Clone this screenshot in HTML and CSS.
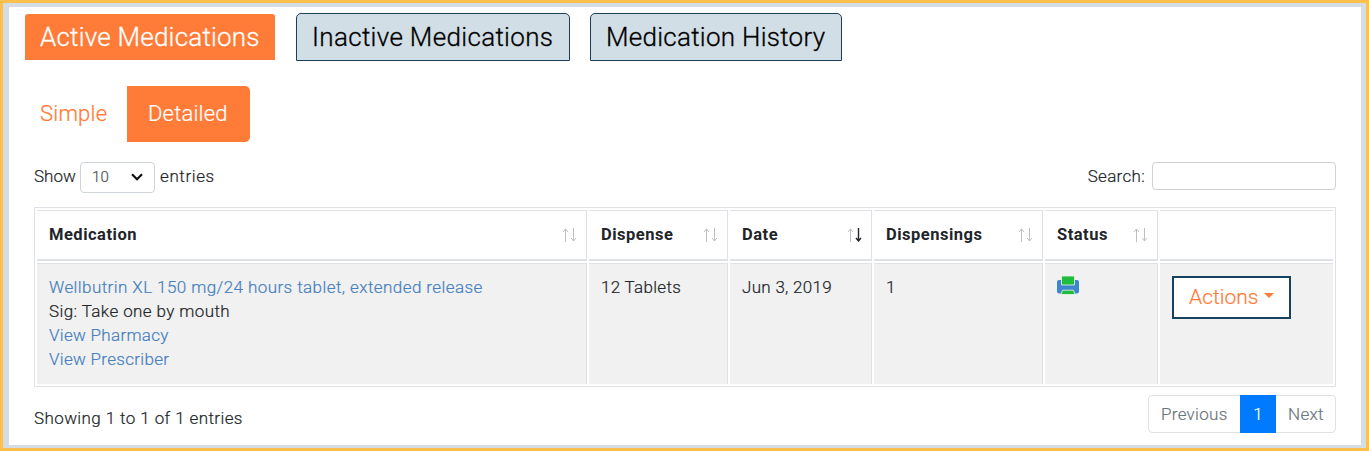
FILE: index.html
```html
<!DOCTYPE html>
<html lang="en">
<head>
  <meta charset="UTF-8" />
  <title>Medications</title>
  <link rel="stylesheet" href="styles.css">
</head>
<body>
  <div class="container">
    <!-- Tabs -->
    <div class="tabs">
      <a class="tab active"><span>Active Medications</span></a>
      <a class="tab"><span>Inactive Medications</span></a>
      <a class="tab history"><span>Medication History</span></a>
    </div>

    <!-- View switch -->
    <div class="pills">
      <a class="pill"><span>Simple</span></a>
      <a class="pill active"><span>Detailed</span></a>
    </div>

    <div class="content">
      <div class="controls">
        <div class="length">
          <span class="show">Show</span>
          <div class="select">
            <span>10</span>
            <svg width="12" height="8" viewBox="0 0 12 8"><path d="M1 1.2 6 6.2 11 1.2" fill="none" stroke="#111" stroke-width="2.2"/></svg>
          </div>
          <span class="entries">entries</span>
        </div>
        <label class="search"><span>Search:</span><input type="text"></label>
      </div>

      <table class="medications">
        <colgroup>
          <col class="col-med"><col class="col-dispense"><col class="col-date"><col class="col-count"><col class="col-status"><col>
        </colgroup>
        <thead>
          <tr>
            <th><div class="head"><span>Medication</span><svg class="sort" width="16" height="14" viewBox="0 0 16 14"><path d="M4.5 14V1M2 4 4.5 1 7 4"/><path d="M12.5 0V13M10 10l2.500 3L15 10"/></svg></div></th>
            <th><div class="head"><span>Dispense</span><svg class="sort" width="16" height="14" viewBox="0 0 16 14"><path d="M4.5 14V1M2 4 4.5 1 7 4"/><path d="M12.5 0V13M10 10l2.500 3L15 10"/></svg></div></th>
            <th><div class="head"><span>Date</span><svg class="sort" width="16" height="14" viewBox="0 0 16 14"><path d="M4.5 14V1M2 4 4.5 1 7 4"/><path class="on" d="M12.5 0V13M10 10l2.500 3L15 10"/></svg></div></th>
            <th><div class="head"><span>Dispensings</span><svg class="sort" width="16" height="14" viewBox="0 0 16 14"><path d="M4.5 14V1M2 4 4.5 1 7 4"/><path d="M12.5 0V13M10 10l2.500 3L15 10"/></svg></div></th>
            <th><div class="head"><span>Status</span><svg class="sort" width="16" height="14" viewBox="0 0 16 14"><path d="M4.5 14V1M2 4 4.5 1 7 4"/><path d="M12.5 0V13M10 10l2.500 3L15 10"/></svg></div></th>
            <th></th>
          </tr>
        </thead>
        <tbody>
          <tr>
            <td>
              <a class="drug">Wellbutrin XL 150 mg/24 hours tablet, extended release</a><br>
              <span class="sig">Sig: Take one by mouth</span><br>
              <a>View Pharmacy</a><br>
              <a>View Prescriber</a>
            </td>
            <td>12 Tablets</td>
            <td>Jun 3, 2019</td>
            <td>1</td>
            <td>
              <svg class="printer" width="22" height="19" viewBox="0 0 22 19">
                <path d="M2 4h18a2 2 0 0 1 2 2v9.500a2 2 0 0 1-2 2H2a2 2 0 0 1-2-2V6a2 2 0 0 1 2-2z" fill="#3c86cc"/>
                <path d="M4.500 0h13V9h-13zM5.500 14.200h11l1.500 4.300H4z" fill="#20bd3b" stroke="#f1f1f1" stroke-width=".8"/>
              </svg>
            </td>
            <td><button class="actions"><span>Actions</span><i class="caret"></i></button></td>
          </tr>
        </tbody>
      </table>

      <div class="footer">
        <div class="info">Showing 1 to 1 of 1 entries</div>
        <div class="pagination">
          <a class="prev">Previous</a>
          <a class="current">1</a>
          <a class="next">Next</a>
        </div>
      </div>
    </div>
  </div>
</body>
</html>
```
FILE: styles.css
```css
* {
  box-sizing: border-box;
}
body {
  margin: 0;
  height: 451px;
  border: 3px solid #ffbf4d;
  padding: 4px 5px 3px 6px;
  background-color: #d3dde2;
  font-family: Roboto, "Liberation Sans", sans-serif;
  font-size: 17px;
  font-weight: 300;
  letter-spacing: 0.3px;
  line-height: 24px;
  color: #212529;
  -webkit-text-stroke-width: 0.2px;
}
.container {
  height: 438px;
  background-color: #fff;
  padding: 6px 25px 0 16px;
  overflow: hidden;
}
.tabs {
  display: flex;
  align-items: center;
  gap: 20px;
}
.tab {
  height: 48px;
  width: 274px;
  display: flex;
  align-items: center;
  padding-left: 15px;
  font-size: 26px;
  letter-spacing: 0.33px;
  color: #000;
  background-color: #d1dee5;
  border: 1px solid #1c4057;
  border-radius: 5px 5px 0 0;
  -webkit-text-stroke-width: 0.3px;
}
.tab.active {
  height: 46px;
  width: 250px;
  margin-right: 1px;
  letter-spacing: 0.22px;
  color: #fff;
  background-color: #ff7b38;
  border: none;
  border-radius: 3px 3px 0 0;
}
.tab.history {
  width: 252px;
  letter-spacing: 0.27px;
}
.pills {
  display: flex;
  margin-top: 25px;
}
.pill {
  height: 56px;
  width: 102px;
  padding-left: 15px;
  display: flex;
  align-items: center;
  font-size: 22px;
  letter-spacing: 0.2px;
  color: #ff7b38;
}
.pill.active {
  width: 123px;
  padding-left: 21px;
  color: #fff;
  background-color: #ff7b38;
  border-radius: 0 5px 5px 0;
}
.content {
  padding: 20px 0 0 9px;
}
.controls {
  display: flex;
  justify-content: space-between;
  height: 45px;
}
.length {
  display: flex;
  height: 31px;
  line-height: 29px;
}
.show {
  width: 46px;
  letter-spacing: 0;
}
.entries {
  letter-spacing: 0.6px;
}
.select {
  width: 75px;
  height: 31px;
  padding: 0 11px;
  margin-right: 5px;
  display: flex;
  align-items: center;
  justify-content: space-between;
  border: 1px solid #ced4da;
  border-radius: 4px;
  font-size: 15px;
  color: #495057;
}
.select svg {
  margin-top: -1px;
}
.search {
  display: flex;
  height: 28px;
  line-height: 29px;
}
.search input {
  width: 184px;
  height: 28px;
  margin-left: 7px;
  border: 1px solid #ced0d3;
  border-radius: 4px;
}
.medications {
  width: 1302px;
  table-layout: fixed;
  border: 1px solid #dee2e6;
  border-collapse: separate;
  border-spacing: 2px;
}
.col-med { width: 550px; }
.col-dispense { width: 139px; }
.col-date { width: 142px; }
.col-count { width: 169px; }
.col-status { width: 113px; }
.medications th,
.medications td {
  padding: 12px;
  text-align: left;
  vertical-align: top;
  border: 0 solid #dee2e6;
  border-width: 1px 1px 0 0;
}
.medications th {
  height: 51px;
  font-size: 16.5px;
  font-weight: 700;
  letter-spacing: 0.5px;
  border-bottom-width: 2px;
  -webkit-text-stroke-width: 0;
}
.medications td {
  height: 121px;
  padding-top: 11px;
  background-color: #f1f1f1;
}
.medications th:last-child,
.medications td:last-child {
  border-right: none;
}
.medications a {
  color: #4680bd;
}
.medications .drug {
  letter-spacing: 0.42px;
}
.sig {
  letter-spacing: 0.4px;
}
.head {
  display: flex;
  align-items: center;
  justify-content: space-between;
  margin-right: -3px;
}
.sort {
  margin-top: -1px;
  fill: none;
  stroke: #bcbec0;
  stroke-width: 1;
}
.sort .on {
  stroke: #212529;
  stroke-width: 1.4;
}
.printer {
  display: block;
  margin-top: 1px;
}
.actions {
  display: flex;
  align-items: center;
  width: 119px;
  height: 43px;
  margin-top: 1px;
  padding: 0 0 0 15px;
  background-color: #fff;
  border: 2px solid #164260;
  color: #ff7b38;
  font-family: inherit;
  font-size: 21px;
  font-weight: 300;
  letter-spacing: 0;
}
.actions span {
  margin-top: -1px;
}
.caret {
  margin: 0 0 4px 6px;
  border: 5px solid transparent;
  border-top-color: #ff7b38;
  border-bottom: none;
}
.footer {
  display: flex;
  justify-content: space-between;
  padding-top: 8px;
}
.info {
  padding-top: 11px;
  letter-spacing: 0.4px;
}
.pagination {
  display: flex;
  width: 188px;
  height: 38px;
  border: 1px solid #dee2e6;
  border-radius: 4px;
  line-height: 36px;
  color: #6c757d;
}
.prev {
  width: 91px;
  padding-left: 12px;
}
.current {
  width: 36px;
  margin: -1px 0;
  line-height: 38px;
  text-align: center;
  color: #fff;
  background-color: #007bff;
}
.next {
  padding-left: 12px;
}
```
